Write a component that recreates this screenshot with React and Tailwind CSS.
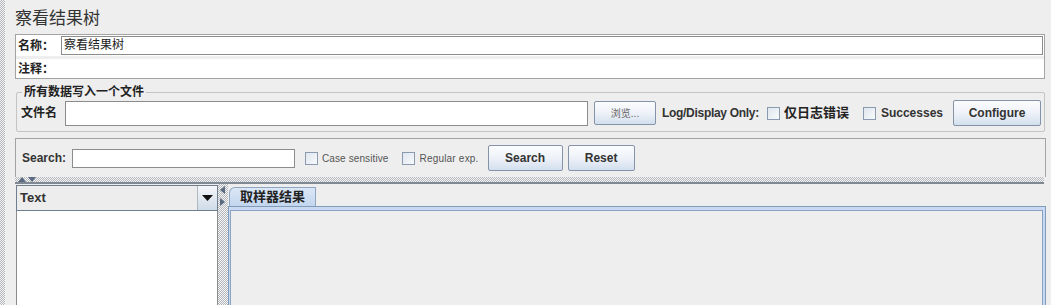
import React from 'react';

const cjk = "font-['Liberation_Sans','Noto_Sans_CJK_SC',sans-serif]";

const dots =
    'bg-[conic-gradient(#b4b8bc_25%,#f4f4f4_0_50%,#b4b8bc_0_75%,#f4f4f4_0)] bg-[length:2px_2px]';

const Checkbox = () => (
    <span className="inline-block w-[13px] h-[13px] border border-[#8a9bb0] bg-gradient-to-br from-[#dfe6ee] to-[#f8fafc] shrink-0 align-middle" />
);

const Button = ({ children, className = '' }) => (
    <button
        className={`flex items-center justify-center shrink-0 whitespace-nowrap border border-[#8593a8] rounded-[2px] bg-gradient-to-b from-[#fbfcfe] via-[#eef2f8] to-[#d3dfee] ${className}`}
    >
        {children}
    </button>
);

const App = () => {
    return (
        <div className={`w-[1051px] h-[305px] bg-[#eeeeee] flex overflow-hidden text-[#222] whitespace-nowrap ${cjk}`}>
            {/* left dotted edge */}
            <div className={`w-[5px] h-full shrink-0 ${dots}`} />

            <div className="flex-1 min-w-0 flex flex-col pl-[10px] pr-[5px]">
                {/* Title */}
                <div className="h-[34px] pt-[8px] text-[17px] leading-[22px] text-[#333]">察看结果树</div>

                {/* Name / comment */}
                <div className="h-[45px] border border-[#a3a3a3] flex flex-col mr-[1px]">
                    <div className="h-[21px] bg-white flex items-center pr-[1px]">
                        <span className="w-[45px] pl-[2px] text-[12px] font-bold">名称：</span>
                        <div className="flex-1 h-[19px] border border-[#8c8c8c] bg-white text-[12px] leading-[17px] pl-[2px]">
                            察看结果树
                        </div>
                    </div>
                    <div className="h-[3px] bg-[#eeeeee]" />
                    <div className="flex-1 bg-white flex items-center">
                        <span className="pl-[2px] text-[12px] font-bold">注释：</span>
                    </div>
                </div>

                {/* Write all data to a file */}
                <fieldset className="mt-[6px] h-[47px] border border-[#c4c4c4] rounded-[2px] pl-[4px] pr-[3px] mx-[1px] min-w-0">
                    <legend className="px-[2px] ml-[1px] text-[12px] font-bold leading-[14px]">所有数据写入一个文件</legend>
                    <div className="flex items-center h-[26px] mt-[1px]">
                        <span className="text-[12px] font-bold w-[44px] shrink-0">文件名</span>
                        <div className="flex-1 min-w-0 h-[25px] border border-[#8c8c8c] bg-white" />
                        <Button className="ml-[6px] w-[62px] h-[24px] text-[10px] text-[#666]">浏览...</Button>
                        <span className="ml-[6px] text-[12px] font-bold text-[#333] shrink-0 tracking-[-0.3px]">Log/Display Only:</span>
                        <span className="ml-[8px] flex"><Checkbox /></span>
                        <span className="ml-[4px] text-[13px] font-bold shrink-0">仅日志错误</span>
                        <span className="ml-[14px] flex"><Checkbox /></span>
                        <span className="ml-[5px] text-[12px] font-bold text-[#333] shrink-0">Successes</span>
                        <Button className="ml-[10px] w-[88px] h-[26px] text-[12px] font-bold text-[#333]">Configure</Button>
                    </div>
                </fieldset>

                {/* Search */}
                <div className="mt-[6px] h-[39px] border-t border-l border-r border-[#a3a3a3] flex items-center pl-[6px]">
                    <span className="text-[12px] font-bold text-[#333]">Search:</span>
                    <div className="ml-[6px] w-[223px] h-[19px] border border-[#8c8c8c] bg-white" />
                    <span className="ml-[10px] flex"><Checkbox /></span>
                    <span className="ml-[4px] text-[10px] text-[#555] tracking-[0.1px]">Case sensitive</span>
                    <span className="ml-[14px] flex"><Checkbox /></span>
                    <span className="ml-[4px] text-[10px] text-[#555] tracking-[0.2px]">Regular exp.</span>
                    <Button className="ml-[9px] w-[75px] h-[26px] text-[12px] font-bold text-[#333]">Search</Button>
                    <Button className="ml-[5px] w-[67px] h-[26px] text-[12px] font-bold text-[#333]">Reset</Button>
                </div>

                {/* horizontal divider */}
                <div className={`h-[7px] ${dots} border-b-2 border-[#7f8893] relative mr-[2px]`}>
                    <div className="absolute left-[3px] top-0 flex gap-[2px]">
                        <svg width="8" height="5" viewBox="0 0 8 5"><path d="M0 5 L4 0 L8 5Z" fill="#5a6a80" /></svg>
                        <svg width="8" height="5" viewBox="0 0 8 5"><path d="M0 0 L8 0 L4 5Z" fill="#5a6a80" /></svg>
                    </div>
                </div>

                {/* Bottom area */}
                <div className="flex-1 flex min-h-0">
                    {/* left list */}
                    <div className="w-[202px] flex flex-col pt-[1px] ml-[1px]">
                        <div className="h-[26px] border border-[#6f7f90] flex bg-[#ededed]">
                            <span className="flex-1 flex items-center pl-[3px] text-[13px] font-bold text-[#333]">Text</span>
                            <div className="w-[20px] border-l border-[#b0b8c0] bg-gradient-to-b from-[#f5f7fa] to-[#cfdbe8] flex items-center justify-center">
                                <svg width="11" height="6" viewBox="0 0 11 6"><path d="M0 0 L11 0 L5.5 6Z" fill="#111" /></svg>
                            </div>
                        </div>
                        <div className="flex-1 bg-white border-l border-r border-[#8a8a8a]" />
                    </div>

                    {/* vertical splitter */}
                    <div className={`w-[10px] ${dots} relative`}>
                        <div className="absolute left-[2px] top-[2px] flex flex-col gap-[4px]">
                            <svg width="5" height="8" viewBox="0 0 5 8"><path d="M5 0 L5 8 L0 4Z" fill="#5a6a80" /></svg>
                            <svg width="5" height="8" viewBox="0 0 5 8"><path d="M0 0 L0 8 L5 4Z" fill="#5a6a80" /></svg>
                        </div>
                    </div>

                    {/* tabs */}
                    <div className="flex-1 flex flex-col pt-[3px]">
                        <div className="flex h-[19px]">
                            <div className="ml-[1px] w-[87px] border-t border-r border-l border-[#8fa6c2] rounded-tl-[6px] bg-gradient-to-b from-[#dbe7f6] to-[#c3d6ee] flex items-center justify-center text-[13px] font-bold text-[#222]">
                                取样器结果
                            </div>
                        </div>
                        <div className="flex-1 border-t border-l border-r border-[#7f9db9] bg-[#c9d9f3] pt-[3px] pl-[1px] pr-[2px]">
                            <div className="h-full border-t border-l border-r border-[#8aa3c0] bg-[#eeeeee]" />
                        </div>
                    </div>
                </div>
            </div>
        </div>
    );
};

export default App;
